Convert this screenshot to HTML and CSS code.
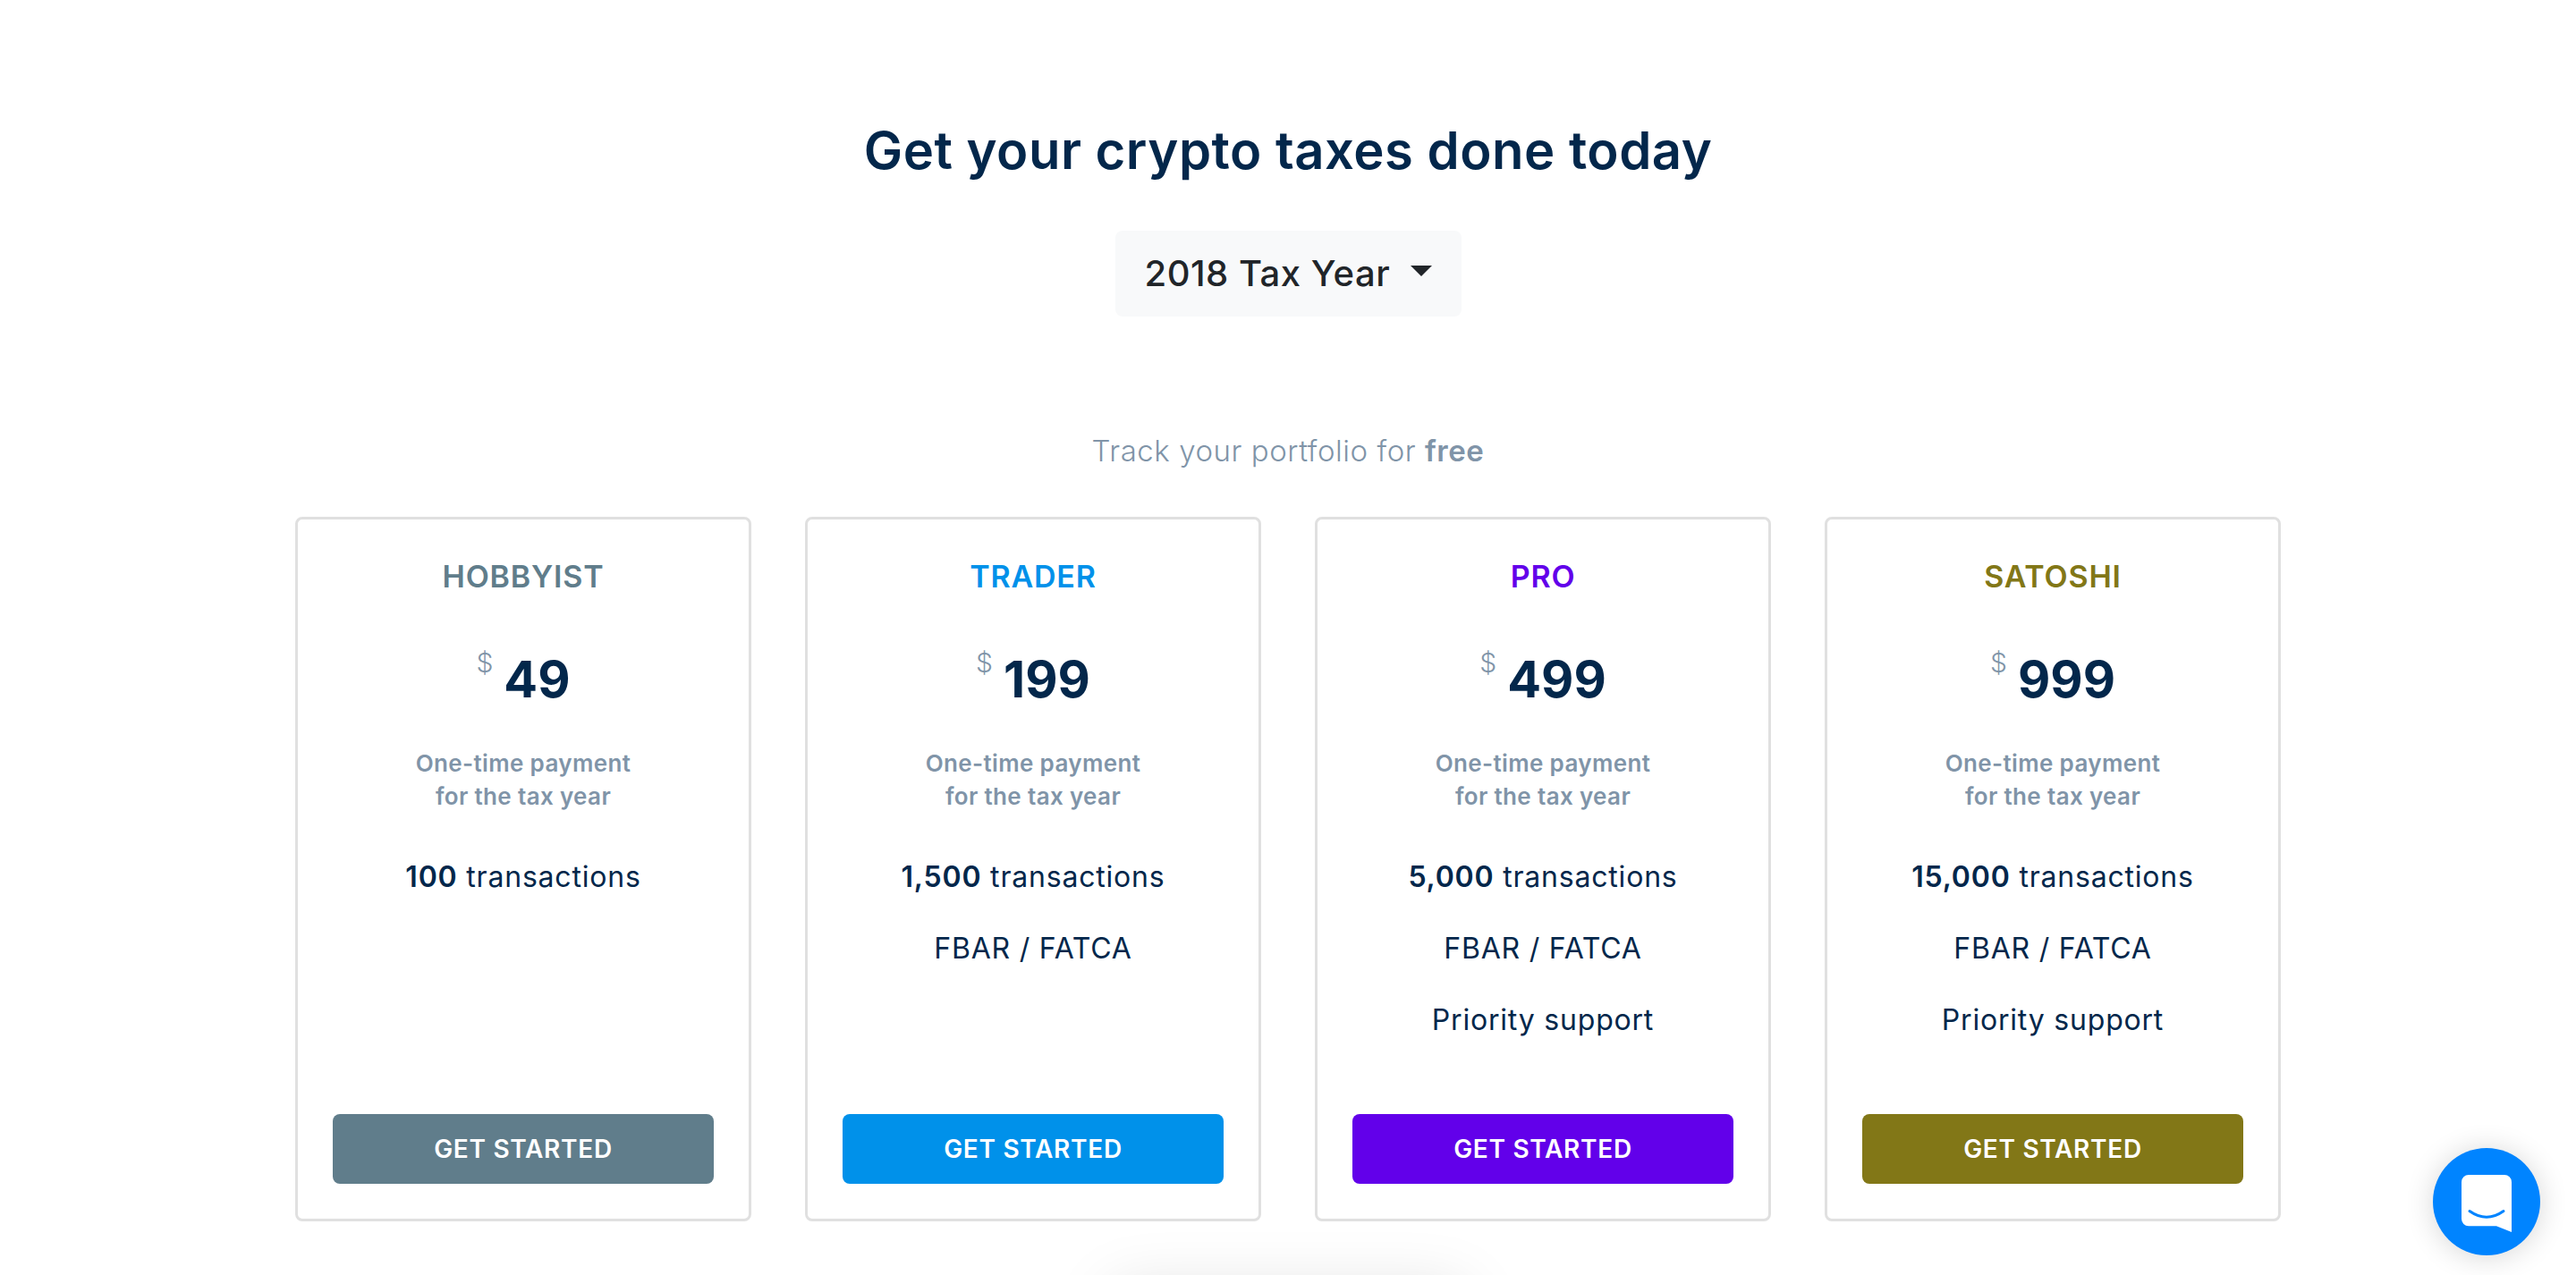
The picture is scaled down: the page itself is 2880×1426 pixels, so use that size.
FILE: index.html
```html
<!DOCTYPE html>
<html lang="en">
<head>
    <meta charset="UTF-8">
    <meta name="viewport" content="width=device-width, initial-scale=1.0">
    <title>Get your crypto taxes done today</title>
    <link rel="stylesheet" href="styles.css">
</head>
<body>
    <div class="pricing">
        <h1>Get your crypto taxes done today</h1>

        <button class="year-select">2018 Tax Year <span class="caret"></span></button>

        <p class="free-note">Track your portfolio for <strong>free</strong></p>

        <div class="plans">
            <div class="plan hobbyist">
                <h2>HOBBYIST</h2>
                <div class="price"><sup>$</sup><span>49</span></div>
                <p class="payment">One-time payment<br>for the tax year</p>
                <ul class="features">
                    <li><strong>100</strong> transactions</li>
                </ul>
                <a class="get-started" href="#">GET STARTED</a>
            </div>
            <div class="plan trader">
                <h2>TRADER</h2>
                <div class="price"><sup>$</sup><span>199</span></div>
                <p class="payment">One-time payment<br>for the tax year</p>
                <ul class="features">
                    <li><strong>1,500</strong> transactions</li>
                    <li>FBAR / FATCA</li>
                </ul>
                <a class="get-started" href="#">GET STARTED</a>
            </div>
            <div class="plan pro">
                <h2>PRO</h2>
                <div class="price"><sup>$</sup><span>499</span></div>
                <p class="payment">One-time payment<br>for the tax year</p>
                <ul class="features">
                    <li><strong>5,000</strong> transactions</li>
                    <li>FBAR / FATCA</li>
                    <li>Priority support</li>
                </ul>
                <a class="get-started" href="#">GET STARTED</a>
            </div>
            <div class="plan satoshi">
                <h2>SATOSHI</h2>
                <div class="price"><sup>$</sup><span>999</span></div>
                <p class="payment">One-time payment<br>for the tax year</p>
                <ul class="features">
                    <li><strong>15,000</strong> transactions</li>
                    <li>FBAR / FATCA</li>
                    <li>Priority support</li>
                </ul>
                <a class="get-started" href="#">GET STARTED</a>
            </div>
        </div>

        <div class="fold">
            <div class="next-section"></div>
        </div>
    </div>

    <a class="chat-launcher" href="#" aria-label="Open chat">
        <svg width="56" height="64" viewBox="0 0 56 64">
            <path d="M8 0H48A8 8 0 0 1 56 8V64L39 57.3H8A8 8 0 0 1 0 49.3V8A8 8 0 0 1 8 0Z" fill="#fff"/>
            <path d="M9 40.5Q28 54 47 40.5" fill="none" stroke="#0084ff" stroke-width="3" stroke-linecap="round"/>
        </svg>
    </a>
</body>
</html>
```

FILE: styles.css
```css
* {
    margin: 0;
    padding: 0;
    box-sizing: border-box;
}
html, body {
    height: 100%;
    overflow: hidden;
}
body {
    font-family: Inter, "Open Sans", sans-serif;
    background: #fff;
    color: #03274b;
}
.pricing {
    display: flex;
    flex-direction: column;
    align-items: center;
    padding-top: 130px;
}
h1 {
    font-size: 58px;
    line-height: 76px;
    font-weight: 600;
    letter-spacing: 0.5px;
    color: #03274b;
}
.year-select {
    display: flex;
    align-items: center;
    justify-content: space-between;
    width: 387px;
    height: 96px;
    margin-top: 52px;
    padding: 0 33px;
    border: none;
    border-radius: 8px;
    background: #f8f9fa;
    color: #212529;
    font-family: inherit;
    font-size: 40px;
    line-height: 94px;
    font-weight: 500;
    letter-spacing: 0.5px;
}
.caret {
    width: 0;
    height: 0;
    border-top: 12px solid #212529;
    border-left: 12px solid transparent;
    border-right: 12px solid transparent;
    margin-bottom: 6px;
}
.free-note {
    margin-top: 128px;
    font-size: 33px;
    line-height: 44px;
    font-weight: 300;
    letter-spacing: 0.55px;
    color: #8094a8;
}
.free-note strong {
    font-weight: 600;
}
.plans {
    display: grid;
    grid-template-columns: repeat(4, 510px);
    gap: 60px;
    margin-top: 52px;
}
.plan {
    display: flex;
    flex-direction: column;
    align-items: center;
    height: 788px;
    padding: 44px 39px 39px;
    border: 3px solid #e0e0e0;
    border-radius: 8px;
    background: #fff;
}
.plan h2 {
    font-size: 34px;
    line-height: 40px;
    font-weight: 600;
    letter-spacing: 0.8px;
}
.price {
    display: flex;
    margin-top: 50px;
    height: 90px;
    align-items: flex-start;
}
.price sup {
    font-size: 30px;
    line-height: 52px;
    font-weight: 300;
    color: #8094a8;
    margin-right: 12px;
}
.price span {
    font-size: 56px;
    line-height: 90px;
    font-weight: 700;
    color: #03274b;
}
.payment {
    margin-top: 30px;
    font-size: 26px;
    line-height: 37px;
    font-weight: 600;
    letter-spacing: 0.35px;
    color: #8094a8;
    text-align: center;
}
.features {
    list-style: none;
    margin-top: 32px;
    text-align: center;
}
.features li {
    font-size: 32px;
    line-height: 80px;
    font-weight: 400;
    letter-spacing: 0.8px;
}
.features strong {
    font-weight: 600;
}
.get-started {
    display: flex;
    align-items: center;
    justify-content: center;
    width: 100%;
    height: 78px;
    margin-top: auto;
    border-radius: 8px;
    color: #fff;
    font-size: 28px;
    font-weight: 600;
    letter-spacing: 0.7px;
    text-decoration: none;
}
.hobbyist h2 { color: #607d8b; }
.hobbyist .get-started { background: #607d8b; }
.trader h2 { color: #0091ea; }
.trader .get-started { background: #0091ea; }
.pro h2 { color: #6200ea; }
.pro .get-started { background: #6200ea; }
.satoshi h2 { color: #827717; }
.satoshi .get-started { background: #827717; }
.fold {
    width: 640px;
    height: 60px;
    overflow: hidden;
}
.next-section {
    width: 395px;
    height: 100px;
    margin: 76px auto 0;
    border-radius: 8px;
    background: #fff;
    box-shadow: 0 0 70px rgba(0,0,0,0.13);
}
.chat-launcher {
    position: fixed;
    right: 40px;
    bottom: 22px;
    display: flex;
    align-items: center;
    justify-content: center;
    width: 120px;
    height: 120px;
    padding-top: 4px;
    border-radius: 50%;
    background: #0084ff;
    box-shadow: 0 2px 32px rgba(0,0,0,0.16);
}
```
